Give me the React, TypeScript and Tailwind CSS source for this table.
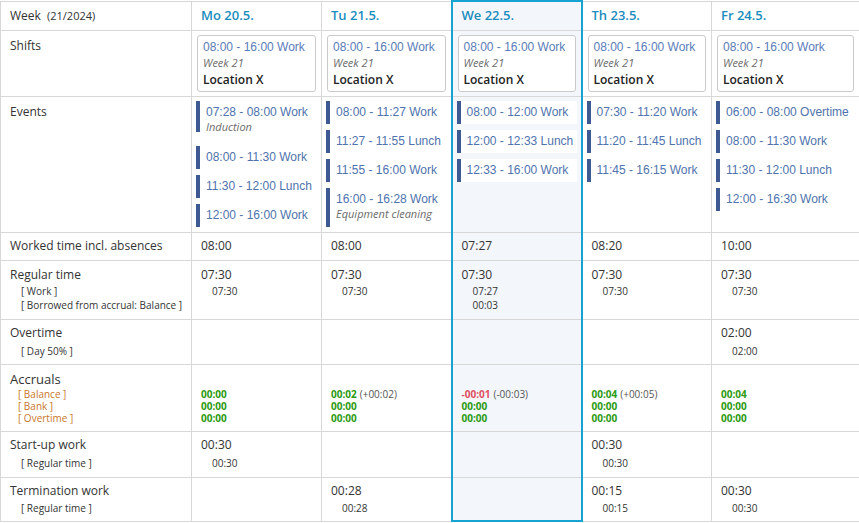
import React from "react";

type Ev = { text: string; note?: string; box?: string };
type Acc = { v: string; neg?: boolean; diff?: string };
type Val = { main: string; subs: string[] } | null;

interface Day {
  label: string;
  events: Ev[];
  worked: string;
  regular: Val;
  overtime: Val;
  accruals: Acc[];
  startup: Val;
  termination: Val;
  hl?: boolean;
}

const zero: Acc = { v: "00:00" };

const days: Day[] = [
  {
    label: "Mo 20.5.",
    events: [
      { text: "07:28 - 08:00 Work", note: "Induction", box: "h-[31px] mb-[8px]" },
      { text: "08:00 - 11:30 Work" },
      { text: "11:30 - 12:00 Lunch" },
      { text: "12:00 - 16:00 Work" },
    ],
    worked: "08:00",
    regular: { main: "07:30", subs: ["07:30"] },
    overtime: null,
    accruals: [zero, zero, zero],
    startup: { main: "00:30", subs: ["00:30"] },
    termination: null,
  },
  {
    label: "Tu 21.5.",
    events: [
      { text: "08:00 - 11:27 Work" },
      { text: "11:27 - 11:55 Lunch" },
      { text: "11:55 - 16:00 Work" },
      { text: "16:00 - 16:28 Work", note: "Equipment cleaning", box: "h-[39px]" },
    ],
    worked: "08:00",
    regular: { main: "07:30", subs: ["07:30"] },
    overtime: null,
    accruals: [{ v: "00:02", diff: "(+00:02)" }, zero, zero],
    startup: null,
    termination: { main: "00:28", subs: ["00:28"] },
  },
  {
    label: "We 22.5.",
    hl: true,
    events: [
      { text: "08:00 - 12:00 Work" },
      { text: "12:00 - 12:33 Lunch" },
      { text: "12:33 - 16:00 Work" },
    ],
    worked: "07:27",
    regular: { main: "07:30", subs: ["07:27", "00:03"] },
    overtime: null,
    accruals: [{ v: "-00:01", neg: true, diff: "(-00:03)" }, zero, zero],
    startup: null,
    termination: null,
  },
  {
    label: "Th 23.5.",
    events: [
      { text: "07:30 - 11:20 Work" },
      { text: "11:20 - 11:45 Lunch" },
      { text: "11:45 - 16:15 Work" },
    ],
    worked: "08:20",
    regular: { main: "07:30", subs: ["07:30"] },
    overtime: null,
    accruals: [{ v: "00:04", diff: "(+00:05)" }, zero, zero],
    startup: { main: "00:30", subs: ["00:30"] },
    termination: { main: "00:15", subs: ["00:15"] },
  },
  {
    label: "Fr 24.5.",
    events: [
      { text: "06:00 - 08:00 Overtime" },
      { text: "08:00 - 11:30 Work" },
      { text: "11:30 - 12:00 Lunch" },
      { text: "12:00 - 16:30 Work" },
    ],
    worked: "10:00",
    regular: { main: "07:30", subs: ["07:30"] },
    overtime: { main: "02:00", subs: ["02:00"] },
    accruals: [{ v: "00:04" }, zero, zero],
    startup: null,
    termination: { main: "00:30", subs: ["00:30"] },
  },
];

const timeFont = "font-['Liberation_Sans',Arial,sans-serif]";

function Td({
  day,
  first,
  last,
  className = "",
  children,
}: {
  day?: Day;
  first?: boolean;
  last?: boolean;
  className?: string;
  children?: React.ReactNode;
}) {
  let hl = "";
  if (day?.hl) {
    hl = "bg-[#f3f7fc] border-x-2 border-x-[#17a3d2]";
    if (first) hl += " border-t-2 border-t-[#17a3d2]";
    if (last) hl += " border-b-2 border-b-[#17a3d2]";
  }
  return (
    <td className={`border border-[#d8d8d8] align-top ${hl} ${className}`}>{children}</td>
  );
}

function ValueCell({ v, subGap = "leading-[14px]" }: { v: Val; subGap?: string }) {
  if (!v) return null;
  return (
    <div className="pl-[9px]">
      <div className="text-[12px] leading-[18px]">{v.main}</div>
      {v.subs.map((s, i) => (
        <div key={i} className={`pl-[11px] text-[10px] ${subGap}`}>
          {s}
        </div>
      ))}
    </div>
  );
}

function Label({ title, subs, subGap = "leading-[14px]" }: { title: string; subs?: string[]; subGap?: string }) {
  return (
    <div className="pl-[9px] whitespace-nowrap">
      <div className="text-[12px] leading-[18px]">{title}</div>
      {subs?.map((s) => (
        <div key={s} className={`pl-[11px] text-[10px] ${subGap}`}>
          {s}
        </div>
      ))}
    </div>
  );
}

export default function App() {
  return (
    <div className="w-[859px] h-[523px] bg-white text-[#333] font-['Open_Sans',sans-serif] overflow-hidden">
      <table className="w-[859px] table-fixed border-collapse">
        <colgroup>
          <col className="w-[191px]" />
          <col className="w-[130px]" />
          <col className="w-[130px]" />
          <col className="w-[130px]" />
          <col className="w-[130px]" />
          <col className="w-[148px]" />
        </colgroup>
        <tbody>
          {/* header */}
          <tr className="h-[29px]">
            <Td className="!align-middle">
              <div className="pl-[9px] text-[12px]">
                Week <span className="text-[11px] ml-[3px]">(21/2024)</span>
              </div>
            </Td>
            {days.map((d) => (
              <Td key={d.label} day={d} first className="!align-middle">
                <div className="pl-[9px] text-[13px] font-semibold text-[#1a8dbd]">{d.label}</div>
              </Td>
            ))}
          </tr>

          {/* shifts */}
          <tr className="h-[66px]">
            <Td className="pt-[6px]">
              <Label title="Shifts" />
            </Td>
            {days.map((d) => (
              <Td key={d.label} day={d} className="px-[5px] pt-[4px]">
                <div className="bg-white border border-[#cacaca] rounded-[3px] px-[5px] pt-[3px] pb-[3px]">
                  <div className={`${timeFont} text-[12px] leading-[16px] text-[#5a7cb8]`}>08:00 - 16:00 Work</div>
                  <div className="text-[11px] leading-[16px] italic text-[#6b6b6b]">Week 21</div>
                  <div className="text-[12px] leading-[17px] font-semibold text-[#222]">Location X</div>
                </div>
              </Td>
            ))}
          </tr>

          {/* events */}
          <tr className="h-[136px]">
            <Td className="pt-[6px]">
              <Label title="Events" />
            </Td>
            {days.map((d) => (
              <Td key={d.label} day={d} className="px-[4px] pt-[4px]">
                <div className="flex flex-col gap-[6px]">
                  {d.events.map((e) => (
                    <div key={e.text} className={`flex bg-white ${e.box ?? "h-[23px]"}`}>
                      <div className="w-[4px] shrink-0 bg-[#3d5b92]" />
                      <div className="pl-[6px] pt-[4px]">
                        <div className={`${timeFont} text-[12px] leading-[15px] text-[#4f73ad] whitespace-nowrap`}>
                          {e.text}
                        </div>
                        {e.note && (
                          <div className="text-[11px] leading-[14px] italic text-[#6b6b6b] whitespace-nowrap">
                            {e.note}
                          </div>
                        )}
                      </div>
                    </div>
                  ))}
                </div>
              </Td>
            ))}
          </tr>

          {/* worked time */}
          <tr className="h-[28px]">
            <Td className="pt-[4px]">
              <Label title="Worked time incl. absences" />
            </Td>
            {days.map((d) => (
              <Td key={d.label} day={d} className="pt-[4px]">
                <div className="pl-[9px] text-[12px] leading-[18px]">{d.worked}</div>
              </Td>
            ))}
          </tr>

          {/* regular time */}
          <tr className="h-[59px]">
            <Td className="pt-[5px]">
              <Label title="Regular time" subs={["[ Work ]", "[ Borrowed from accrual: Balance ]"]} />
            </Td>
            {days.map((d) => (
              <Td key={d.label} day={d} className="pt-[5px]">
                <ValueCell v={d.regular} />
              </Td>
            ))}
          </tr>

          {/* overtime */}
          <tr className="h-[45px]">
            <Td className="pt-[4px]">
              <Label title="Overtime" subs={["[ Day 50% ]"]} subGap="leading-[18px]" />
            </Td>
            {days.map((d) => (
              <Td key={d.label} day={d} className="pt-[4px]">
                <ValueCell v={d.overtime} subGap="leading-[18px]" />
              </Td>
            ))}
          </tr>

          {/* accruals */}
          <tr className="h-[67px]">
            <Td className="pt-[5px]">
              <div className="pl-[9px]">
                <div className="text-[13px] leading-[18px]">Accruals</div>
                <div className="pl-[8px] text-[10px] leading-[12px] text-[#c9772b]">
                  <div>[ Balance ]</div>
                  <div>[ Bank ]</div>
                  <div>[ Overtime ]</div>
                </div>
              </div>
            </Td>
            {days.map((d) => (
              <Td key={d.label} day={d} className="pt-[5px]">
                <div className="pl-[9px] pt-[18px] text-[10px] leading-[12px]">
                  {d.accruals.map((a, i) => (
                    <div key={i} className="whitespace-nowrap">
                      <span className={`font-bold ${a.neg ? "text-[#e0505e]" : "text-[#2c9a12]"}`}>{a.v}</span>
                      {a.diff && <span className="text-[#555] ml-[3px]">{a.diff}</span>}
                    </div>
                  ))}
                </div>
              </Td>
            ))}
          </tr>

          {/* start-up */}
          <tr className="h-[46px]">
            <Td className="pt-[4px]">
              <Label title="Start-up work" subs={["[ Regular time ]"]} subGap="leading-[18px]" />
            </Td>
            {days.map((d) => (
              <Td key={d.label} day={d} className="pt-[4px]">
                <ValueCell v={d.startup} subGap="leading-[18px]" />
              </Td>
            ))}
          </tr>

          {/* termination */}
          <tr className="h-[44px]">
            <Td className="pt-[4px]">
              <Label title="Termination work" subs={["[ Regular time ]"]} subGap="leading-[16px]" />
            </Td>
            {days.map((d) => (
              <Td key={d.label} day={d} last className="pt-[4px]">
                <ValueCell v={d.termination} subGap="leading-[16px]" />
              </Td>
            ))}
          </tr>
        </tbody>
      </table>
    </div>
  );
}
